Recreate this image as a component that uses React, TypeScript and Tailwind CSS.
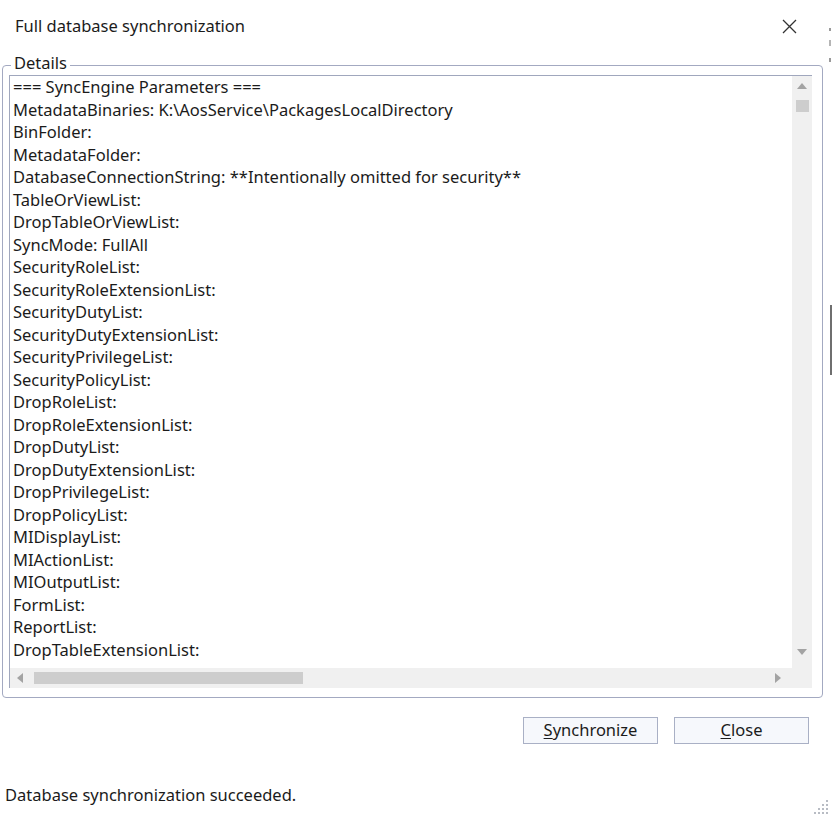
import React from "react";

const lines = [
  "=== SyncEngine Parameters ===",
  "MetadataBinaries: K:\\AosService\\PackagesLocalDirectory",
  "BinFolder:",
  "MetadataFolder:",
  "DatabaseConnectionString: **Intentionally omitted for security**",
  "TableOrViewList:",
  "DropTableOrViewList:",
  "SyncMode: FullAll",
  "SecurityRoleList:",
  "SecurityRoleExtensionList:",
  "SecurityDutyList:",
  "SecurityDutyExtensionList:",
  "SecurityPrivilegeList:",
  "SecurityPolicyList:",
  "DropRoleList:",
  "DropRoleExtensionList:",
  "DropDutyList:",
  "DropDutyExtensionList:",
  "DropPrivilegeList:",
  "DropPolicyList:",
  "MIDisplayList:",
  "MIActionList:",
  "MIOutputList:",
  "FormList:",
  "ReportList:",
  "DropTableExtensionList:",
];

function Tri({ dir }: { dir: "up" | "down" | "left" | "right" }) {
  const pts =
    dir === "up"
      ? "0,6 5,0 10,6"
      : dir === "down"
      ? "0,0 10,0 5,6"
      : dir === "left"
      ? "6,0 6,10 0,5"
      : "0,0 0,10 6,5";
  const w = dir === "up" || dir === "down" ? 10 : 6;
  const h = dir === "up" || dir === "down" ? 6 : 10;
  return (
    <svg width={w} height={h} viewBox={`0 0 ${w} ${h}`}>
      <polygon points={pts} fill="#a3a3a3" />
    </svg>
  );
}

function Grip() {
  const dots: [number, number][] = [
    [12, 0],
    [8, 4],
    [12, 4],
    [4, 8],
    [8, 8],
    [12, 8],
    [0, 12],
    [4, 12],
    [8, 12],
    [12, 12],
  ];
  return (
    <svg width="15" height="15" viewBox="0 0 15 15">
      {dots.map(([x, y], i) => (
        <rect key={i} x={x} y={y} width="2" height="2" fill="#b8bcc4" />
      ))}
    </svg>
  );
}

export default function App() {
  return (
    <div
      className="relative w-[832px] h-[823px] overflow-hidden bg-white flex flex-col text-[#1b1b1b]"
      style={{ fontFamily: '"Noto Sans", "Open Sans", sans-serif' }}
    >
      {/* Title bar */}
      <div className="h-[52px] flex items-center justify-between pl-[15px] pr-[35px] shrink-0">
        <span className="text-[16.5px]">Full database synchronization</span>
        <svg width="15" height="15" viewBox="0 0 15 15">
          <path d="M1 1 L14 14 M14 1 L1 14" stroke="#333" strokeWidth="1.3" fill="none" />
        </svg>
      </div>

      {/* Group box */}
      <div className="relative mt-[13px] ml-[2px] w-[821px] h-[633px] border border-[#a3a9c1] rounded-[4px] pt-[9px] pl-[6px] shrink-0">
        <span className="absolute left-[8px] -top-[15px] bg-white px-[3px] text-[16.5px] leading-[24px]">
          Details
        </span>
        {/* Text box */}
        <div className="w-[803px] h-[613px] border-l border-t border-[#a0a7bd] grid grid-cols-[1fr_20px] grid-rows-[1fr_20px] bg-white">
          <div className="overflow-hidden pl-[3px] text-[16.5px] leading-[22.5px] whitespace-nowrap">
            {lines.map((l, i) => (
              <div key={i}>{l}</div>
            ))}
          </div>
          {/* vertical scrollbar */}
          <div className="bg-[#f0f0f0] flex flex-col items-center">
            <div className="h-[20px] flex items-center justify-center">
              <Tri dir="up" />
            </div>
            <div className="mt-[4px] w-[13px] h-[12px] bg-[#cdcdcd]" />
            <div className="flex-1" />
            <div className="h-[20px] mb-[6px] flex items-center justify-center">
              <Tri dir="down" />
            </div>
          </div>
          {/* horizontal scrollbar */}
          <div className="bg-[#f0f0f0] flex items-center">
            <div className="w-[20px] flex justify-center">
              <Tri dir="left" />
            </div>
            <div className="ml-[4px] w-[269px] h-[12px] bg-[#cdcdcd]" />
            <div className="flex-1" />
            <div className="w-[20px] mr-[4px] flex justify-center">
              <Tri dir="right" />
            </div>
          </div>
          <div className="bg-[#f0f0f0]" />
        </div>
      </div>

      {/* Buttons */}
      <div className="mt-[19px] flex justify-end gap-[16px] pr-[23px] shrink-0">
        <button className="w-[135px] h-[27px] border border-[#a9b0c5] bg-[#f6f8fc] text-[16.5px] leading-none flex items-center justify-center">
          <span>
            <span className="underline underline-offset-2">S</span>ynchronize
          </span>
        </button>
        <button className="w-[135px] h-[27px] border border-[#a9b0c5] bg-[#f6f8fc] text-[16.5px] leading-none flex items-center justify-center">
          <span>
            <span className="underline underline-offset-2">C</span>lose
          </span>
        </button>
      </div>

      {/* Status */}
      <div className="mt-[40px] pl-[5px] text-[16.5px] leading-[22px]">
        Database synchronization succeeded.
      </div>

      {/* Resize grip */}
      <div className="absolute right-[3px] bottom-[8px]">
        <Grip />
      </div>

      {/* Background window edge artifacts */}
      <div className="absolute left-[829px] top-[28px] w-[2px] h-[3px] bg-[#9a9a9a]" />
      <div className="absolute left-[829px] top-[40px] w-[2px] h-[6px] bg-[#b5b5b5]" />
      <div className="absolute left-[829px] top-[58px] w-[2px] h-[4px] bg-[#9a9a9a]" />
      <div className="absolute left-[830px] top-[305px] w-[2px] h-[70px] bg-[#6f6f6f]" />
    </div>
  );
}
